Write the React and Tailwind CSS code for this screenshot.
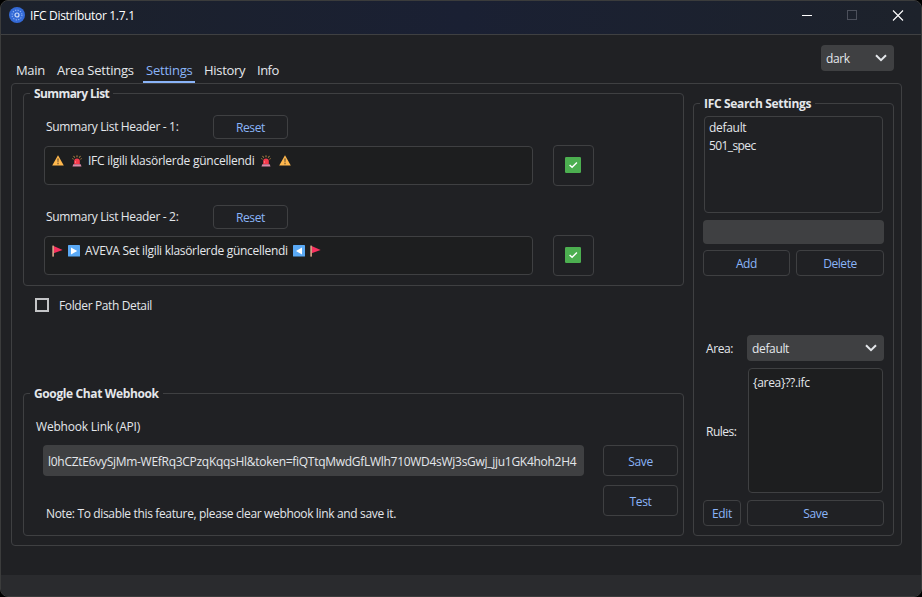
import React from "react";

const cx = (...c) => c.filter(Boolean).join(" ");

function Button({ children, className }) {
  return (
    <button
      className={cx(
        "flex shrink-0 items-center justify-center rounded-[4px] border border-[#3f4042] tracking-[-0.35px] text-[#8ab4f8]",
        className
      )}
    >
      {children}
    </button>
  );
}

function Group({ title, className, legendClass, children }) {
  return (
    <fieldset className={cx("min-w-0 shrink-0 rounded-[4px] border border-[#3f4042] pl-[6px]", className)}>
      <legend className={cx("h-[19px] pl-[4px] font-bold leading-[20px] whitespace-nowrap", legendClass)}>
        {title}
      </legend>
      {children}
    </fieldset>
  );
}

function Chevron() {
  return (
    <svg width="12" height="8" viewBox="0 0 12 8" fill="none" className="shrink-0">
      <path d="M1 1.2 6 6.2 11 1.2" stroke="#e4e7eb" strokeWidth="2" />
    </svg>
  );
}

function Combo({ children, className }) {
  return (
    <div className={cx("flex h-[26px] shrink-0 items-center justify-between rounded-[4px] bg-[#3f4042] pr-[7px] pl-[5px]", className)}>
      <span className="pt-[2px] tracking-[-0.35px]">{children}</span>
      <Chevron />
    </div>
  );
}

function Warning() {
  return (
    <svg width="12" height="11" viewBox="0 0 12 11" className="shrink-0">
      <path d="M6 .3 11.8 10.6H.2Z" fill="#ffb84d" />
      <path d="M5.3 3.6h1.4L6.4 7.4h-.8Z" fill="#6b5233" />
      <rect x="5.4" y="8" width="1.2" height="1.3" fill="#6b5233" />
    </svg>
  );
}

function Siren() {
  return (
    <svg width="10" height="12" viewBox="0 0 10 12" className="shrink-0">
      <path d="M5 .4v1.8M1.6 .9 2.7 2.700M8.4 .9 7.3 2.700M.4 3.6l1.1.6M9.6 3.6l-1.1.6" stroke="#d09a4c" strokeWidth=".9" />
      <path d="M2.200 9.200V6a2.800 2.600 0 0 1 5.600 0v3.200Z" fill="#f8394c" />
      <path d="M3.500 8V6" stroke="#ff7a84" strokeWidth=".8" />
      <path d="M1.300 9.200h7.400l.8 2.200H.5Z" fill="#d98aa8" />
    </svg>
  );
}

function Flag() {
  return (
    <svg width="11" height="12" viewBox="0 0 11 12" className="shrink-0">
      <path d="M1.6 1 10.6 4.9 1.6 8.2Z" fill="#f8315f" />
      <rect x="0.4" y="0.6" width="1.4" height="11" fill="#f3b795" />
    </svg>
  );
}

function Play({ flip }) {
  return (
    <svg width="12" height="12" viewBox="0 0 12 12" className="shrink-0">
      <rect width="12" height="11.5" rx=".6" fill="#5aa9f5" />
      <path d={flip ? "M9 2.4v7L3 5.9Z" : "M3 2.4v7L9.2 5.9Z"} fill="#fff" />
    </svg>
  );
}

function Check() {
  return (
    <svg width="16" height="16" viewBox="0 0 16 16" className="mr-px mb-px">
      <rect width="16" height="16" rx="1.2" fill="#4caf50" />
      <path d="m4.600 7.900 2.500 2.400 4.800-4.800" fill="none" stroke="#fff" strokeWidth="1.400" />
    </svg>
  );
}

function AppIcon() {
  return (
    <svg width="16" height="16" viewBox="0 0 16 16" className="shrink-0">
      <circle cx="8" cy="8" r="8" fill="#346ad6" />
      <circle cx="8" cy="8" r="4.9" fill="none" stroke="#8fb3f3" strokeWidth="1.1" strokeDasharray="1.2 1.366" />
      <circle cx="8" cy="8" r="2" fill="none" stroke="#cfdefa" strokeWidth="1.2" />
    </svg>
  );
}

function HeaderEditor({ label, children }) {
  return (
    <>
      <div className="ml-[16px] flex h-[24px] items-center">
        <span className="w-[167px] tracking-[-0.34px]">{label}</span>
        <Button className="h-[24px] w-[75px] pt-px">Reset</Button>
      </div>
      <div className="mt-[6px] ml-[14px] flex h-[41px] items-center gap-[20px]">
        <div className="flex h-[39px] w-[489px] items-start rounded-[4px] border border-[#3f4042] bg-[#1d1e1f] pt-[5px] pl-[7px]">
          <div className="flex h-[17px] items-center">{children}</div>
        </div>
        <Button className="h-[41px] w-[41px]">
          <Check />
        </Button>
      </div>
    </>
  );
}

export default function App() {
  return (
    <div className="h-[597px] w-[922px] overflow-hidden bg-black font-['Open_Sans','Noto_Sans',sans-serif] text-[12px] leading-[16px] text-[#e4e7eb]">
      <div className="flex h-[597px] w-[922px] flex-col overflow-hidden rounded-[8px] border border-[#3b3c3c] bg-[#202124]">
        <header className="flex h-[34px] shrink-0 items-start border-b border-[#3f4042] bg-linear-to-r from-[#1c212b] via-[#1a2033] to-[#1d222b] pt-[6px] pl-[8px] text-white">
          <AppIcon />
          <span className="ml-[5px] leading-[18px] whitespace-nowrap tracking-[-0.3px]">IFC Distributor 1.7.1</span>
          <svg width="104" height="16" viewBox="0 0 104 16" className="mr-[16px] ml-auto" fill="none">
            <path d="M1 8.5h10" stroke="#fff" />
            <rect x="46.500" y="3.500" width="9" height="9" stroke="#4c505b" />
            <path d="M92 3.500 102 13.500M102 3.500 92 13.500" stroke="#fff" strokeWidth="1.100" />
          </svg>
        </header>

        <nav className="flex h-[48px] shrink-0 items-end pl-[9px] text-[13px] leading-[18px] tracking-[-0.22px] whitespace-nowrap">
          <span className="h-[22px] w-[41px] pl-[6px] tracking-[-0.35px]">Main</span>
          <span className="h-[22px] w-[89px] pl-[6px]">Area Settings</span>
          <span className="ml-[3px] h-[22px] w-[52px] border-b-2 border-[#8ab4f8] pl-[3px] text-[#8ab4f8]">Settings</span>
          <span className="h-[22px] w-[53px] pl-[9px] tracking-[-0.3px]">History</span>
          <span className="h-[22px] pl-[9px] tracking-[-0.5px]">Info</span>
          <Combo className="mr-[27px] mb-[12px] ml-auto w-[73px] text-[12px]">dark</Combo>
        </nav>

        <main className="mx-[10px] flex h-[463px] w-[891px] shrink-0 rounded-[4px] border border-[#3f4042] pl-[11px]">
          <div className="flex w-[661px] shrink-0 flex-col">
            <Group title="Summary List" className="h-[202px]" legendClass="w-[83px] tracking-[-0.6px]">
              <div className="pt-[12px]">
                <HeaderEditor label="Summary List Header - 1:">
                  <Warning />
                  <span className="w-[8px]" />
                  <Siren />
                  <span className="ml-[6px] w-[168px] tracking-[-0.25px] whitespace-nowrap">IFC ilgili klasörlerde güncellendi</span>
                  <span className="w-[5px]" />
                  <Siren />
                  <span className="w-[8px]" />
                  <Warning />
                </HeaderEditor>
                <div className="h-[19px]" />
                <HeaderEditor label="Summary List Header - 2:">
                  <Flag />
                  <span className="w-[5px]" />
                  <Play />
                  <span className="ml-[5px] w-[203px] tracking-[-0.3px] whitespace-nowrap">AVEVA Set ilgili klasörlerde güncellendi</span>
                  <span className="w-[5px]" />
                  <Play flip />
                  <span className="w-[5px]" />
                  <Flag />
                </HeaderEditor>
              </div>
            </Group>

            <label className="mt-[9px] ml-[12px] flex h-[20px] items-center gap-[10px]">
              <span className="h-[14px] w-[14px] border-2 border-[#c4c5c7]" />
              <span className="pt-[2px] tracking-[-0.37px]">Folder Path Detail</span>
            </label>

            <Group title="Google Chat Webhook" className="mt-[69px] h-[152px]" legendClass="w-[133px] tracking-[-0.38px]">
              <div className="mt-[16px] ml-[6px] tracking-[-0.2px]">Webhook Link (API)</div>
              <div className="mt-[10px] ml-[13px] flex items-start gap-[19px]">
                <div className="flex h-[31px] w-[541px] items-center overflow-hidden rounded-[4px] bg-[#3f4042] pt-[2px] pl-[5px] whitespace-nowrap">
                  <span className="tracking-[-0.285px]">l0hCZtE6vySjMm-WEfRq3CPzqKqqsHl&amp;token=fiQTtqMwdGfLWlh710WD4sWj3sGwj_jju1GK4hoh2H4</span>
                </div>
                <Button className="h-[31px] w-[75px] pt-[3px]">Save</Button>
              </div>
              <div className="mt-[9px] ml-[16px] flex">
                <span className="mt-[21px] w-[557px] tracking-[-0.35px]">Note: To disable this feature, please clear webhook link and save it.</span>
                <Button className="h-[31px] w-[75px] pt-[3px]">Test</Button>
              </div>
            </Group>
          </div>

          <Group title="IFC Search Settings" className="mt-[10px] ml-[9px] h-[442px] w-[201px]" legendClass="w-[115px] tracking-[-0.33px]">
            <div className="ml-[3px] w-[181px] pt-[3px]">
              <div className="mx-px h-[97px] rounded-[4px] border border-[#3f4042] pt-[2px] pl-[4px] leading-[18px] tracking-[-0.3px]">
                <div>default</div>
                <div className="tracking-[-0.6px]">501_spec</div>
              </div>
              <div className="mt-[7px] h-[24px] rounded-[4px] bg-[#3f4042]" />
              <div className="mt-[6px] flex h-[26px] gap-[6px]">
                <Button className="w-[87px] pt-[2px]">Add</Button>
                <Button className="w-[88px] pt-[2px] tracking-[-0.45px]">Delete</Button>
              </div>
              <div className="mt-[59px] flex items-center">
                <span className="w-[44px] pt-[2px] pl-[3px] tracking-[-0.4px]">Area:</span>
                <Combo className="w-[137px]">default</Combo>
              </div>
              <div className="mt-[7px] flex items-center">
                <span className="w-[45px] pt-[2px] pl-[3px] tracking-[-0.5px]">Rules:</span>
                <div className="h-[125px] w-[135px] rounded-[4px] border border-[#3f4042] bg-[#1d1e1f] pt-[6px] pl-[4px] tracking-[-0.3px]">{"{area}??.ifc"}</div>
              </div>
              <div className="mt-[7px] flex h-[26px] gap-[6px]">
                <Button className="w-[38px] pt-[2px]">Edit</Button>
                <Button className="w-[137px] pt-[2px]">Save</Button>
              </div>
            </div>
          </Group>
        </main>

        <footer className="mt-auto h-[21px] shrink-0 bg-[#2a2b2e]" />
      </div>
    </div>
  );
}
